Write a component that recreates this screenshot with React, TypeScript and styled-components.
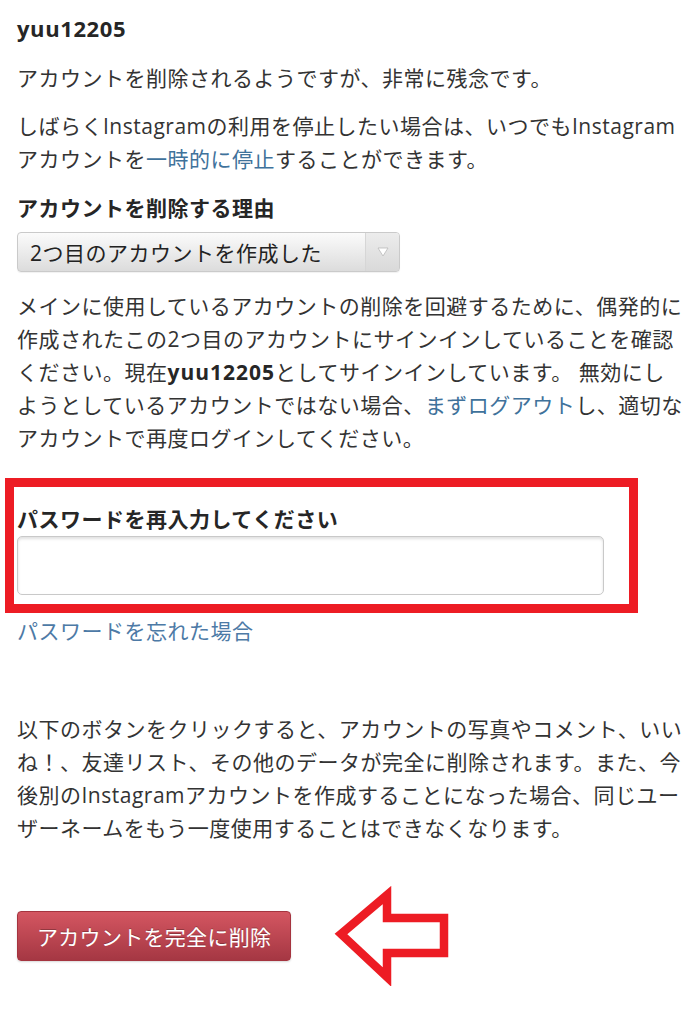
import React from "react";
import styled, { createGlobalStyle } from "styled-components";

const Global = createGlobalStyle`
  html, body {
    margin: 0;
    padding: 0;
    background: #ffffff;
    overflow: hidden;
  }
  body {
    font-family: "Open Sans", "Noto Sans CJK JP", sans-serif;
    color: #333333;
  }
`;

const Page = styled.main`
  width: 684px;
  padding: 12px 0 0 17px;
  box-sizing: border-box;
`;

const Column = styled.div`
  width: 668px;
  display: flex;
  flex-direction: column;
  align-items: flex-start;
`;

const UserName = styled.h1`
  margin: 0;
  font-size: 22px;
  line-height: 33px;
  font-weight: 700;
  letter-spacing: 0.6px;
  color: #262626;
`;

const Paragraph = styled.p<{ $top: number }>`
  margin: ${(p) => p.$top}px 0 0;
  font-size: 21px;
  line-height: 33px;
  letter-spacing: 0.5px;
  color: #333333;
`;

const Strong = styled.strong`
  font-weight: 700;
  letter-spacing: 1px;
  color: #262626;
`;

const Link = styled.a`
  color: #3f729b;
  text-decoration: none;
  cursor: pointer;
`;

const SectionTitle = styled.h2<{ $top: number }>`
  margin: ${(p) => p.$top}px 0 0;
  font-size: 21px;
  line-height: 33px;
  font-weight: 700;
  letter-spacing: 0.5px;
  color: #262626;
`;

const SelectBox = styled.div`
  margin-top: 7px;
  width: 383px;
  height: 40px;
  box-sizing: border-box;
  display: flex;
  align-items: stretch;
  border: 1px solid #cacaca;
  border-radius: 4px;
  background: linear-gradient(#fbfbfb, #dcdcdc);
  box-shadow: 0 1px 1px rgba(0, 0, 0, 0.06);
`;

const SelectValue = styled.span`
  flex: 1;
  display: flex;
  align-items: center;
  padding-left: 12px;
  font-size: 21px;
  letter-spacing: 0.5px;
  color: #222222;
`;

const SelectArrow = styled.span`
  width: 33px;
  display: flex;
  align-items: center;
  justify-content: center;
  border-left: 1px solid #d6d6d6;
  background: linear-gradient(#ececec, #d9d9d9);
  border-radius: 0 3px 3px 0;
`;

const Frame = styled.section`
  margin: 23px 0 0 -12px;
  width: 633px;
  box-sizing: border-box;
  border: 9px solid #ed1c24;
  padding: 16px 25px 9px 3px;
  display: flex;
  flex-direction: column;
`;

const FieldLabel = styled.label`
  font-size: 21px;
  line-height: 33px;
  font-weight: 700;
  letter-spacing: 0.5px;
  color: #262626;
`;

const TextInput = styled.input`
  width: 587px;
  height: 59px;
  box-sizing: border-box;
  border: 1px solid #c9c9c9;
  border-radius: 5px;
  box-shadow: inset 0 2px 3px rgba(0, 0, 0, 0.12);
  background: #ffffff;
  font-size: 20px;
  padding: 0 12px;
  outline: none;
`;

const ForgotLink = styled(Link)`
  margin-top: 4px;
  font-size: 21px;
  line-height: 28px;
  letter-spacing: 0.5px;
  color: #4d7aa6;
`;

const ActionRow = styled.div`
  margin-top: 41px;
  display: flex;
  align-items: center;
  gap: 38px;
`;

const DangerButton = styled.button`
  box-sizing: border-box;
  height: 50px;
  padding: 0 19px;
  border: 1px solid #a5343f;
  border-radius: 4px;
  background: linear-gradient(#d45661, #a53743);
  box-shadow: 0 1px 2px rgba(0, 0, 0, 0.15);
  color: #ffffff;
  font-family: "Open Sans", "Noto Sans CJK JP", sans-serif;
  font-size: 21px;
  letter-spacing: 0.3px;
  text-shadow: 0 -1px 0 rgba(0, 0, 0, 0.25);
  cursor: pointer;
`;

const Triangle = () => (
  <svg width="12" height="10" viewBox="0 0 12 10">
    <polygon points="1,1 11,1 6,9" fill="#ffffff" stroke="#b9b9b9" strokeWidth="0.8" />
  </svg>
);

const PointerArrow = () => (
  <svg width="124" height="100" viewBox="0 0 124 100">
    <polygon
      points="12,48 58,9 58,32 115,32 115,67 58,67 58,91"
      fill="none"
      stroke="#ed1c24"
      strokeWidth="8.5"
      strokeLinejoin="miter"
    />
  </svg>
);

export default function App() {
  return (
    <>
      <Global />
      <Page>
        <Column>
          <UserName>yuu12205</UserName>
          <Paragraph $top={17}>アカウントを削除されるようですが、非常に残念です。</Paragraph>
          <Paragraph $top={15}>
            しばらくInstagramの利用を停止したい場合は、いつでもInstagramアカウントを
            <Link>一時的に停止</Link>することができます。
          </Paragraph>
          <SectionTitle $top={16}>アカウントを削除する理由</SectionTitle>
          <SelectBox>
            <SelectValue>2つ目のアカウントを作成した</SelectValue>
            <SelectArrow>
              <Triangle />
            </SelectArrow>
          </SelectBox>
          <Paragraph $top={18}>
            メインに使用しているアカウントの削除を回避するために、偶発的に作成されたこの2つ目のアカウントにサインインしていることを確認ください。現在
            <Strong>yuu12205</Strong>としてサインインしています。 無効にしようとしているアカウントではない場合、
            <Link>まずログアウト</Link>し、適切なアカウントで再度ログインしてください。
          </Paragraph>
          <Frame>
            <FieldLabel htmlFor="pw">パスワードを再入力してください</FieldLabel>
            <TextInput id="pw" type="password" />
          </Frame>
          <ForgotLink>パスワードを忘れた場合</ForgotLink>
          <Paragraph $top={68}>
            以下のボタンをクリックすると、アカウントの写真やコメント、いいね！、友達リスト、その他のデータが完全に削除されます。また、今後別のInstagramアカウントを作成することになった場合、同じユーザーネームをもう一度使用することはできなくなります。
          </Paragraph>
          <ActionRow>
            <DangerButton>アカウントを完全に削除</DangerButton>
            <PointerArrow />
          </ActionRow>
        </Column>
      </Page>
    </>
  );
}
